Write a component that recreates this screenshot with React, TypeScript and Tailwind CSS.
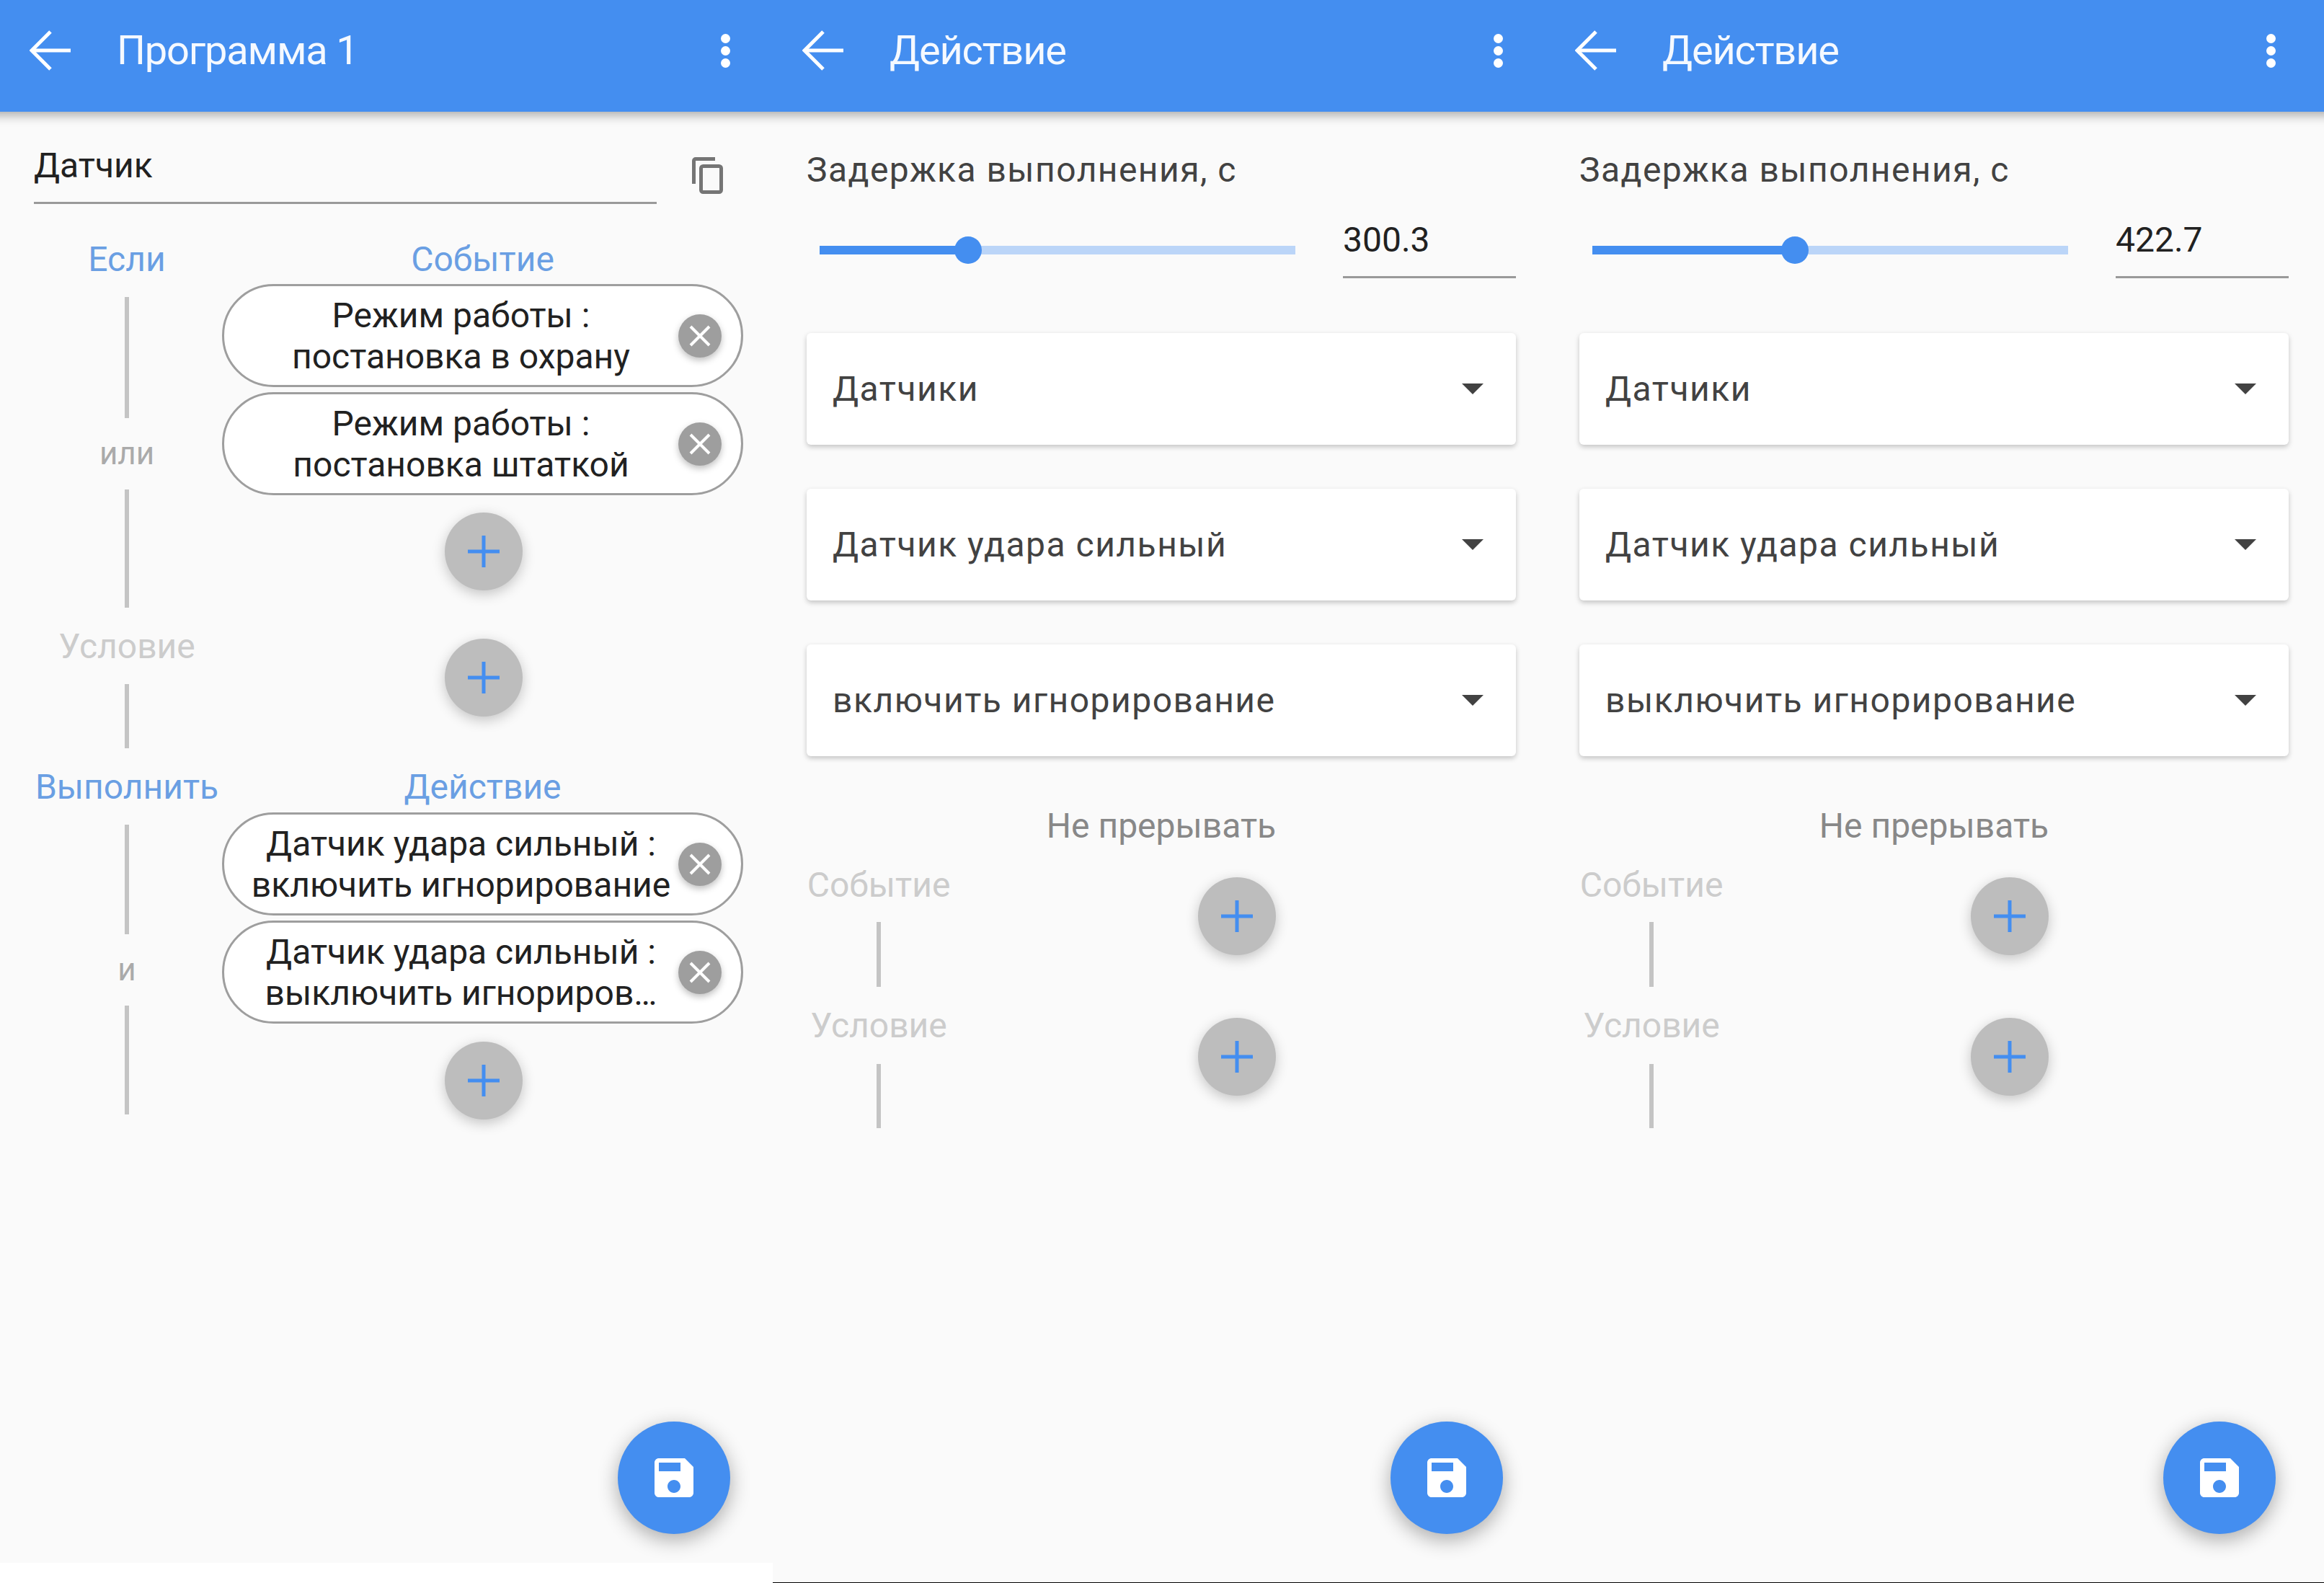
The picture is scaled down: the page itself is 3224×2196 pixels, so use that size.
const BackIcon = () => (
  <svg width="57" height="56" viewBox="0 0 57 56" fill="none" stroke="#fff" strokeWidth="5">
    <path d="M57 28H4" />
    <path d="M29 2 3 28l26 26" />
  </svg>
);

// header runs past the panel edges so its shadow doesn't fade out at the seams
const Header = ({ title, pad = "pr-[99px]" }: { title: string; pad?: string }) => (
  <header className={`relative z-10 mx-[-40px] flex h-[155px] items-center bg-[#448ef0] pb-[15px] pl-[81px] shadow-[0_5px_14px_rgba(0,0,0,0.32)] ${pad}`}>
    <BackIcon />
    <h1 className="ml-[64px] text-[56px] leading-[64px] font-normal tracking-[-1.2px] text-white/95">{title}</h1>
    <div className="ml-auto flex flex-col gap-[4px]">
      <span className="h-[13px] w-[13px] rounded-full bg-white" />
      <span className="h-[13px] w-[13px] rounded-full bg-white" />
      <span className="h-[13px] w-[13px] rounded-full bg-white" />
    </div>
  </header>
);

const PlusButton = ({ className = "" }: { className?: string }) => (
  <button className={`flex h-[108px] w-[108px] items-center justify-center rounded-full bg-[#bdbdbd] shadow-[0_5px_18px_rgba(0,0,0,0.22)] ${className}`}>
    <svg width="44" height="44" viewBox="0 0 44 44" stroke="#448ef0" strokeWidth="5">
      <path d="M22 0v44M0 22h44" />
    </svg>
  </button>
);

const SaveFab = () => (
  <button className="absolute left-[857px] top-[1972px] flex h-[156px] w-[156px] items-center justify-center rounded-full bg-[#448ef0] shadow-[0_8px_28px_rgba(0,0,0,0.32)]">
    <svg width="72" height="72" viewBox="0 0 24 24" fill="#fff">
      <path d="M17 3H5c-1.11 0-2 .9-2 2v14c0 1.1.89 2 2 2h14c1.1 0 2-.9 2-2V7l-4-4zm-5 16c-1.66 0-3-1.34-3-3s1.34-3 3-3 3 1.34 3 3-1.34 3-3 3zm3-10H5V5h10v4z" />
    </svg>
  </button>
);

const Chip = ({ top, bottom, className = "" }: { top: string; bottom: string; className?: string }) => (
  <div className={`flex h-[143px] w-[723px] items-center rounded-full border-[3px] border-[#9e9e9e] bg-white pl-[27px] ${className}`}>
    <div className="w-[603px] text-center text-[48px] leading-[57px] text-[#212121]">
      <div>{top}</div>
      <div>{bottom}</div>
    </div>
    <button className="flex h-[60px] w-[60px] items-center justify-center rounded-full bg-[#9e9e9e] shadow-[0_4px_10px_rgba(0,0,0,0.25)]">
      <svg width="30" height="30" viewBox="0 0 30 30" stroke="#fff" strokeWidth="4">
        <path d="M2 2l26 26M28 2 2 28" />
      </svg>
    </button>
  </div>
);

const Seg = ({ className }: { className: string }) => <div className={`w-[6px] bg-[#c4c4c4] ${className}`} />;

const ProgramPanel = () => (
  <section className="relative h-[2168px] w-[1072px] shrink-0 overflow-hidden bg-[#fafafa]">
    <Header title="Программа 1" />

    {/* name field */}
    <div className="mt-[48px] flex pl-[47px]">
      <div className="h-[80px] w-[864px] border-b-[3px] border-[#999] text-[48px] leading-[54px] text-[#212121]">Датчик</div>
      <svg className="ml-[49px] mt-[15px]" width="43" height="51" viewBox="0 0 43 51" fill="none" stroke="#757575" strokeWidth="5">
        <path d="M2.500 37V5a2.500 2.500 0 0 1 2.500-2.500h27" />
        <rect x="12.500" y="12.500" width="28" height="36" rx="3" />
      </svg>
    </div>

    <div className="mt-[50px] flex pl-[47px]">
      {/* left rail */}
      <div className="flex w-[258px] flex-col items-center text-[48px] leading-[54px]">
        <div className="text-[#6a9fe3]">Если</div>
        <Seg className="mt-[25px] h-[168px]" />
        <div className="mt-[22px] text-[44px] text-[#aaaaaa]">или</div>
        <Seg className="mt-[23px] h-[164px]" />
        <div className="mt-[27px] text-[#cccccc]">Условие</div>
        <Seg className="mt-[25px] h-[89px]" />
        <div className="mt-[27px] text-[#6a9fe3]">Выполнить</div>
        <Seg className="mt-[25px] h-[152px]" />
        <div className="mt-[22px] text-[44px] text-[#aaaaaa]">и</div>
        <Seg className="mt-[23px] h-[151px]" />
      </div>

      <div className="ml-[3px] flex w-[723px] flex-col items-center text-[48px] leading-[54px]">
        <div className="text-[#6a9fe3]">Событие</div>
        <Chip className="mt-[7px]" top="Режим работы :" bottom="постановка в охрану" />
        <Chip className="mt-[7px]" top="Режим работы :" bottom="постановка штаткой" />
        <PlusButton className="ml-[2px] mt-[24px]" />
        <PlusButton className="ml-[2px] mt-[67px]" />
        <div className="mt-[71px] text-[#6a9fe3]">Действие</div>
        <Chip className="mt-[8px]" top="Датчик удара сильный :" bottom="включить игнорирование" />
        <Chip className="mt-[7px]" top="Датчик удара сильный :" bottom="выключить игнориров…" />
        <PlusButton className="ml-[2px] mt-[25px]" />
      </div>
    </div>

    <SaveFab />
  </section>
);

const Dropdown = ({ label }: { label: string }) => (
  <div className="flex h-[155px] w-[984px] items-center justify-between rounded-[6px] bg-white pl-[36px] pr-[45px] shadow-[0_3px_7px_rgba(0,0,0,0.22)]">
    <span className="text-[48px] tracking-[1.5px] text-[#424242]">{label}</span>
    <span className="h-0 w-0 border-x-[15px] border-t-[15px] border-x-transparent border-t-[#424242]" />
  </div>
);

const ActionPanel = ({ value, percent, action, width, pad }: { value: string; percent: number; action: string; width: string; pad: string }) => (
  <section className={`relative h-[2196px] shrink-0 overflow-hidden border-b border-black bg-[#fafafa] ${width}`}>
    <Header title="Действие" pad={pad} />
    <div className="mt-[54px] pl-[47px] text-[48px] leading-[54px] tracking-[1.45px] text-[#424242]">Задержка выполнения, с</div>

    <div className="mt-[43px] flex pl-[65px]">
      <div className="relative mt-[35px] h-[12px] w-[660px] bg-[#bbd5f8]">
        <div className="h-full bg-[#448ef0]" style={{ width: `${percent}%` }} />
        <div className="absolute top-[-13px] ml-[-19px] h-[38px] w-[38px] rounded-full bg-[#448ef0]" style={{ left: `${percent}%` }} />
      </div>
      <div className="ml-[66px] h-[80px] w-[240px] border-b-[3px] border-[#999] text-[48px] leading-[54px] text-[#212121]">{value}</div>
    </div>

    <div className="ml-[47px] mt-[76px] flex flex-col gap-[61px]">
      <Dropdown label="Датчики" />
      <Dropdown label="Датчик удара сильный" />
      <Dropdown label={action} />
    </div>

    <div className="ml-[47px] mt-[70px] w-[984px] text-center text-[48px] leading-[54px] text-[#888888]">Не прерывать</div>

    <div className="mt-[28px] flex pl-[47px]">
      <div className="flex w-[200px] flex-col items-center text-[48px] leading-[54px] text-[#cccccc]">
        <div>Событие</div>
        <Seg className="mt-[24px] h-[90px]" />
        <div className="mt-[27px]">Условие</div>
        <Seg className="mt-[26px] h-[89px]" />
      </div>
      <div className="ml-[343px] flex flex-col">
        <PlusButton className="mt-[16px]" />
        <PlusButton className="mt-[87px]" />
      </div>
    </div>

    <SaveFab />
  </section>
);

export default function App() {
  return (
    <div className="flex h-[2196px] w-[3224px] overflow-hidden bg-white font-['Roboto',sans-serif]">
      <ProgramPanel />
      <ActionPanel value="300.3" percent={31.2} action="включить игнорирование" width="w-[1072px]" pad="pr-[99px]" />
      <ActionPanel value="422.7" percent={42.6} action="выключить игнорирование" width="w-[1080px]" pad="pr-[107px]" />
    </div>
  );
}
